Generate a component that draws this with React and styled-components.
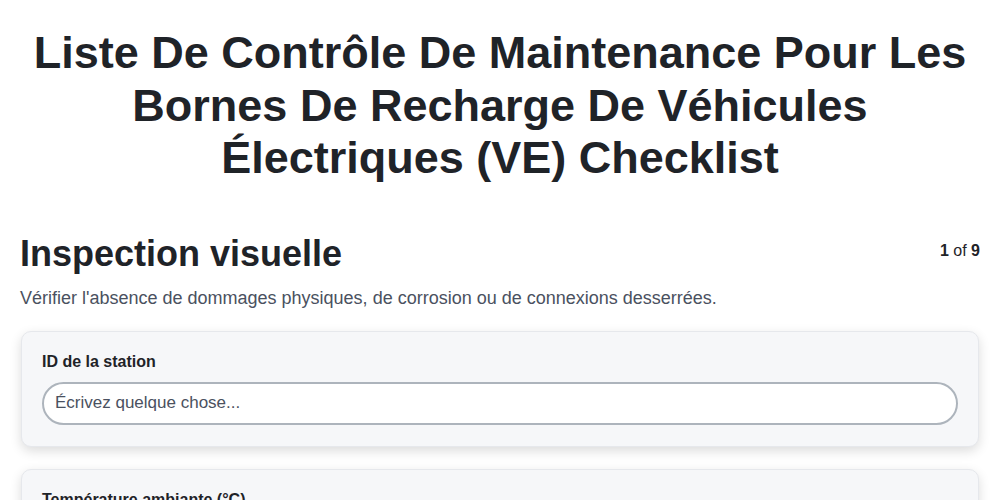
import React from 'react'
import styled, { createGlobalStyle } from 'styled-components'

const GlobalStyle = createGlobalStyle`
  body {
    margin: 0;
    background: #ffffff;
    font-family: "Liberation Sans", Arial, sans-serif;
    color: #1f2328;
  }
`

const fields = [
  { label: 'ID de la station' },
  { label: 'Température ambiante (°C)' },
  { label: 'Notes' },
]

const App = () => {
  return (
    <Page>
      <GlobalStyle />
      <Title>
        Liste De Contrôle De Maintenance Pour Les Bornes De Recharge De Véhicules Électriques (VE) Checklist
      </Title>
      <SectionHeader>
        <SectionTitle>Inspection visuelle</SectionTitle>
        <Counter><b>1</b> of <b>9</b></Counter>
      </SectionHeader>
      <Description>
        Vérifier l'absence de dommages physiques, de corrosion ou de connexions desserrées.
      </Description>
      <Fields>
        {fields.map((field, idx) => (
          <Card key={idx}>
            <Label>{field.label}</Label>
            <Input placeholder="Écrivez quelque chose..." />
          </Card>
        ))}
      </Fields>
    </Page>
  )
}

export default App

const Page = styled.div`
  padding: 0 20px 40px;
`

const Title = styled.h1`
  margin: 27px auto 0;
  max-width: 960px;
  text-align: center;
  font-size: 45px;
  line-height: 52.5px;
  font-weight: 700;
  color: #1f2328;
`

const SectionHeader = styled.div`
  display: flex;
  justify-content: space-between;
  align-items: flex-start;
  margin-top: 48px;
`

const SectionTitle = styled.h2`
  margin: 0;
  font-size: 36px;
  line-height: 42px;
  font-weight: 700;
  color: #1f2328;
`

const Counter = styled.div`
  font-size: 16px;
  line-height: 18px;
  margin-top: 9px;
  color: #1f2328;
`

const Description = styled.p`
  margin: 12px 0 0;
  font-size: 18px;
  line-height: 22px;
  color: #4a5160;
`

const Fields = styled.div`
  display: flex;
  flex-direction: column;
  gap: 22px;
  margin: 22px 1px 0;
`

const Card = styled.div`
  background: #f6f7f9;
  border: 1px solid #e6e8ec;
  border-radius: 10px;
  box-shadow: 0 4px 12px rgba(0, 0, 0, 0.14);
  padding: 21px 20px 21px;
`

const Label = styled.div`
  font-size: 16px;
  line-height: 18px;
  font-weight: 700;
  color: #1f2328;
  margin-bottom: 11px;
`

const Input = styled.input`
  display: block;
  box-sizing: border-box;
  width: 100%;
  height: 43px;
  border: 2px solid #adb4bc;
  border-radius: 22px;
  background: #ffffff;
  padding: 0 11px;
  font-family: "Liberation Sans", Arial, sans-serif;
  font-size: 17px;
  color: #1f2328;
  outline: none;

  &::placeholder {
    color: #4a5160;
  }
`
